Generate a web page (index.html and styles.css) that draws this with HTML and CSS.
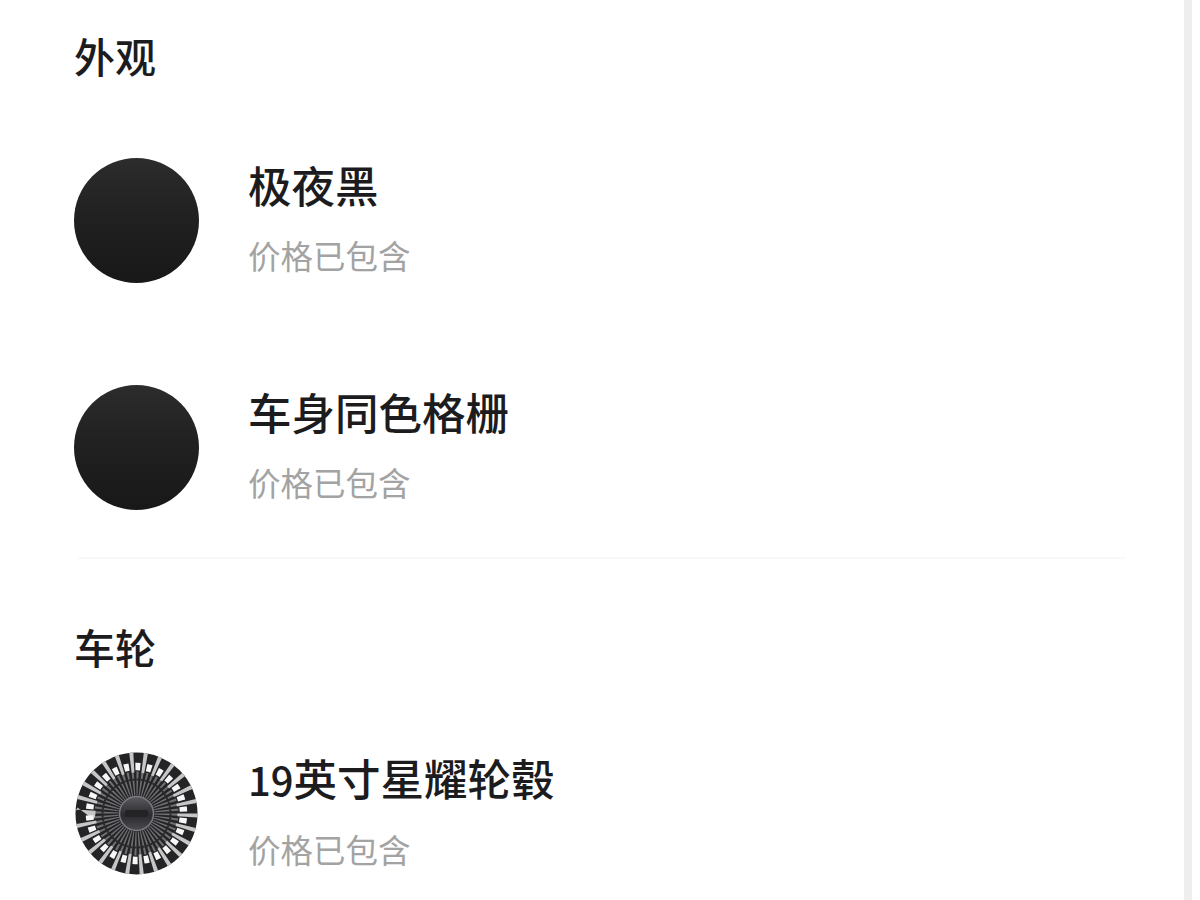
FILE: index.html
```html
<!DOCTYPE html>
<html lang="zh-CN">
<head>
  <meta charset="UTF-8">
  <title>外观</title>
  <link rel="stylesheet" href="styles.css">
</head>
<body>
  <main class="page">
    <section class="group">
      <h2 class="group-title">外观</h2>
      <div class="option">
        <div class="swatch"></div>
        <div class="option-text">
          <div class="option-name">极夜黑</div>
          <div class="option-note">价格已包含</div>
        </div>
      </div>
      <div class="option">
        <div class="swatch"></div>
        <div class="option-text">
          <div class="option-name">车身同色格栅</div>
          <div class="option-note">价格已包含</div>
        </div>
      </div>
    </section>
    <div class="divider"></div>
    <section class="group group-wheels">
      <h2 class="group-title">车轮</h2>
      <div class="option">
        <svg class="wheel" viewBox="0 0 125 125" aria-hidden="true">
          <defs>
            <linearGradient id="hubFill" x1="0" y1="0" x2="0" y2="1">
              <stop offset="0" stop-color="#5a5a5f"/>
              <stop offset="0.55" stop-color="#2c2c30"/>
              <stop offset="1" stop-color="#4a4a4f"/>
            </linearGradient>
          </defs>
          <circle cx="62.5" cy="62.5" r="61" fill="#242427"/>
          <!-- inner fine spokes -->
          <circle cx="62.5" cy="62.5" r="30" fill="none" stroke="#707074" stroke-width="24" pathLength="260" stroke-dasharray="2.2 2.8"/>
          <circle cx="62.5" cy="62.5" r="34" fill="none" stroke="#2a2a2d" stroke-width="2" pathLength="260" stroke-dasharray="3 2"/>
          <!-- outer light spokes -->
          <circle cx="62.5" cy="62.5" r="51" fill="none" stroke="#c6c6c6" stroke-width="20" pathLength="260" stroke-dasharray="2.8 7.2"/>
          <!-- windows between the spokes -->
          <circle cx="62.5" cy="62.5" r="47" fill="none" stroke="#f7f7f7" stroke-width="7.5" pathLength="260" stroke-dasharray="4.4 5.6" stroke-dashoffset="-4"/>
          <circle cx="62.5" cy="62.5" r="17" fill="url(#hubFill)" stroke="#7c7c80" stroke-width="1.5"/>
          <rect x="51" y="59" width="23" height="7" rx="2" fill="#232326"/>
        </svg>
        <div class="option-text">
          <div class="option-name"><span class="option-size">19</span>英寸星耀轮毂</div>
          <div class="option-note">价格已包含</div>
        </div>
      </div>
    </section>
    <div class="edge"></div>
  </main>
</body>
</html>
```

FILE: styles.css
```css
html, body {
  margin: 0;
  padding: 0;
  height: 100%;
  background-color: #fff;
  overflow: hidden;
}

body {
  font-family: "Noto Sans CJK SC", "Liberation Sans", sans-serif;
  color: #1c1c1e;
}

.page {
  display: flex;
  flex-direction: column;
  height: 900px;
  padding-left: 74px;
  box-sizing: border-box;
}

.group {
  width: 1052px;
}

.group-title {
  margin: 0;
  padding-top: 26px;
  font-size: 41px;
  line-height: 58px;
  font-weight: 500;
}

.option {
  display: flex;
  align-items: flex-start;
  gap: 49px;
  margin-top: 74px;
  height: 125px;
}

.group .option + .option {
  margin-top: 102px;
}

.divider {
  flex: none;
  width: 1048px;
  height: 2px;
  margin: 47px 0 0 4px;
  background-color: #f9f9f9;
}

.group-wheels {
  padding-top: 46px;
}

.group-wheels .group-title {
  padding-top: 12px;
}

.group-wheels .option {
  margin-top: 76px;
}

.swatch {
  flex: none;
  width: 125px;
  height: 125px;
  border-radius: 50%;
  background: linear-gradient(180deg, #2c2c2c 0%, #212121 45%, #181818 100%);
  filter: blur(0.5px);
}

.wheel {
  flex: none;
  width: 125px;
  height: 125px;
  filter: blur(0.7px);
}

.option-text {
  display: flex;
  flex-direction: column;
}

.option-name {
  margin-top: -1px;
  font-size: 43.5px;
  line-height: 56px;
  font-weight: 500;
}

.option-size {
  font-size: 40px;
}

.option-note {
  margin-top: 20px;
  font-size: 32.5px;
  line-height: 44px;
  color: #a3a3a3;
}

.edge {
  position: absolute;
  top: 0;
  bottom: 0;
  left: 1184px;
  width: 8px;
  background-color: #eeeeee;
}
```
